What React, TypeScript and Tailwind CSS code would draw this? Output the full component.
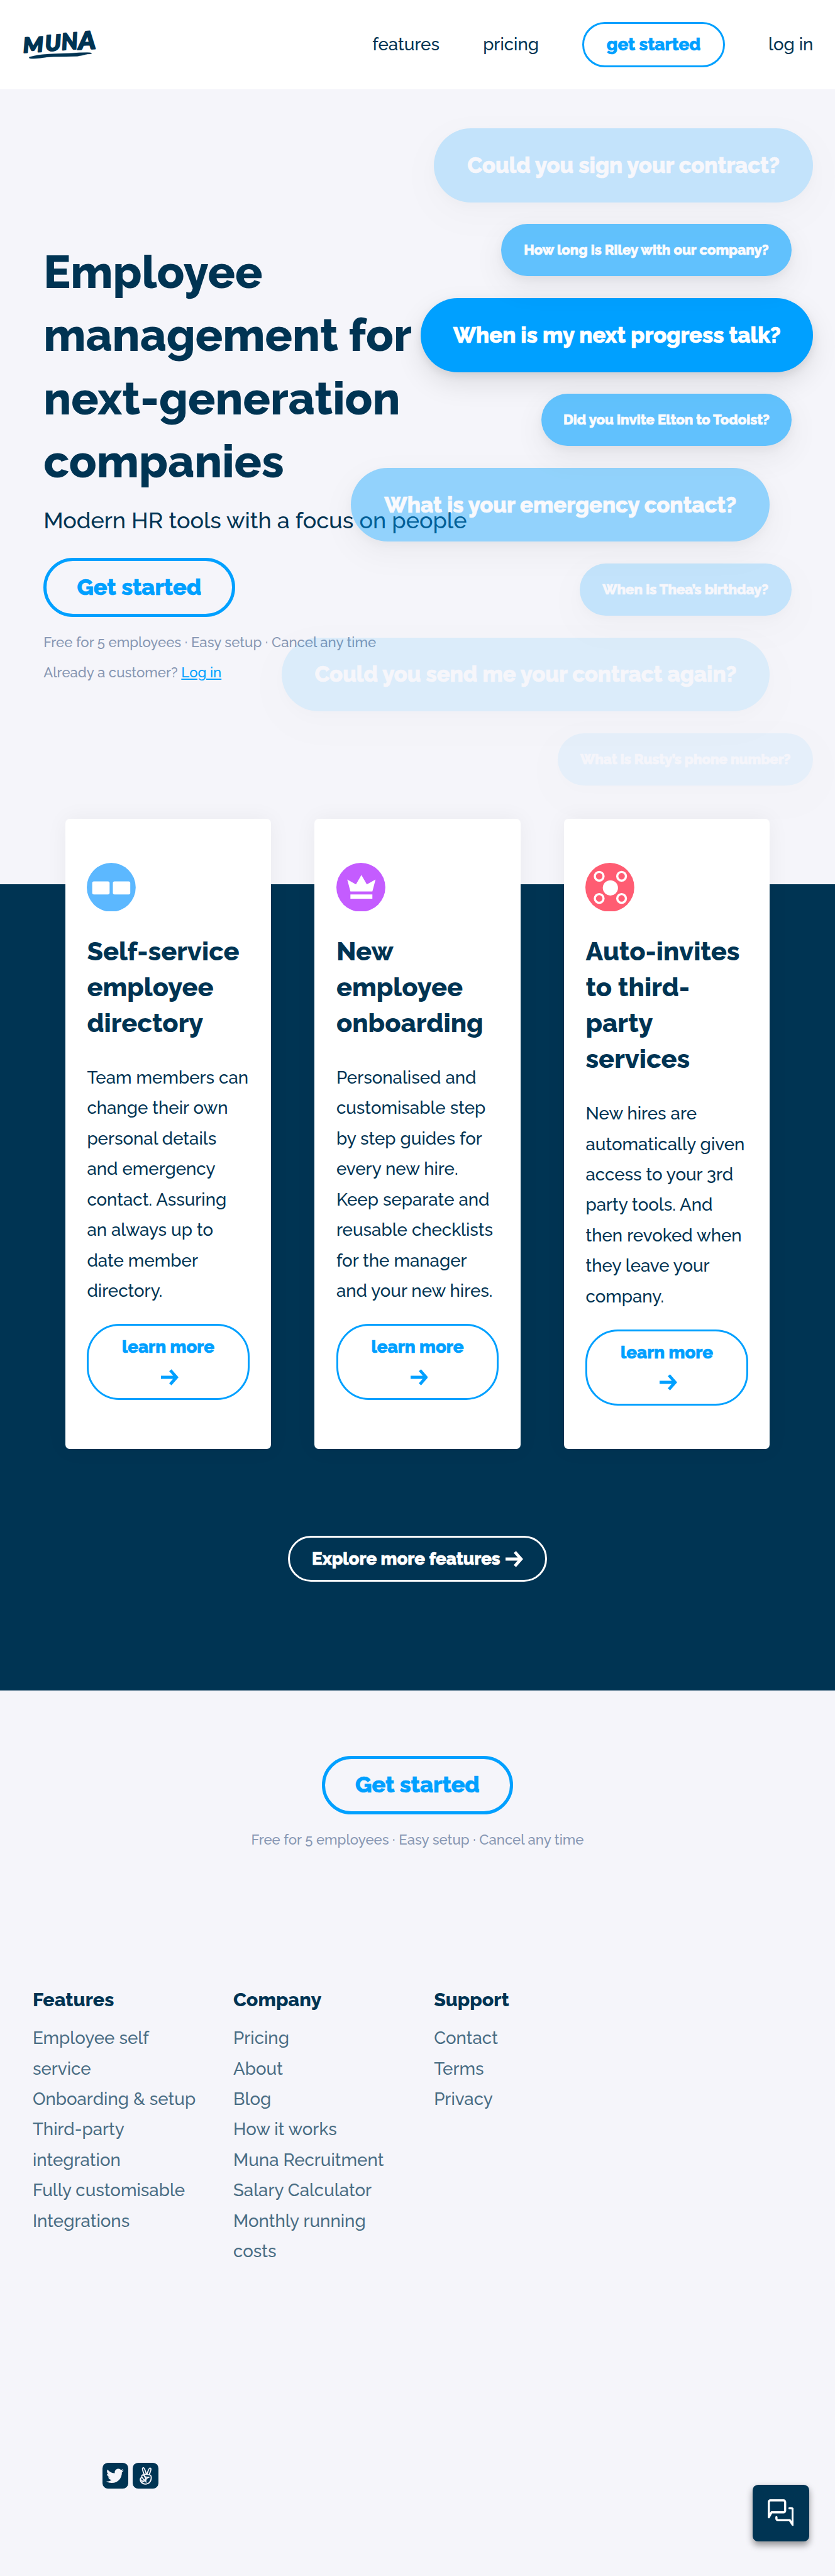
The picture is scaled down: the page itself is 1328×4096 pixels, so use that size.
import type { ReactNode } from "react";
import { FaAngellist, FaTwitter } from "react-icons/fa";

function Arrow() {
  return (
    <svg viewBox="0 0 16 15" className="h-[15px] w-4" fill="none" stroke="currentColor" strokeWidth="2.8">
      <path d="M0 7.5h14M8.600 1l5.700 6.500L8.600 14" />
    </svg>
  );
}

function Logo() {
  return (
    <svg viewBox="120 165 420 175" className="h-[29.2px] w-[70px] overflow-visible" fill="#003453" stroke="#003453" strokeWidth="7" strokeLinejoin="round">
      <g fontFamily="Lato, sans-serif" fontWeight="900" fontStyle="italic">
        <text transform="translate(128 296) rotate(-3)" fontSize="114" textLength="112" lengthAdjust="spacingAndGlyphs">M</text>
        <text transform="translate(250 288) rotate(-4)" fontSize="120" textLength="88" lengthAdjust="spacingAndGlyphs">U</text>
        <text transform="translate(340 281) rotate(-4)" fontSize="126" textLength="90" lengthAdjust="spacingAndGlyphs">N</text>
        <text transform="translate(432 279) rotate(-3)" fontSize="136" textLength="96" lengthAdjust="spacingAndGlyphs">A</text>
      </g>
      <path strokeWidth="1" d="M160 320q38-11 100-16 60-4 120-5 60-4 100-4 20 0 25 4-1 4-24 5-30 8-56 12-60 2-130 2-40 1-76 8-30 4-54 2-8-2-5-8Z" />
    </svg>
  );
}

type Bubble = { text: string; large?: boolean; size: string };

const bubbles: Bubble[] = [
  { text: "Could you sign your contract?", large: true, size: "w-[349px] opacity-20" },
  { text: "How long is Riley with our company?", size: "mr-5 w-[267px] opacity-60" },
  { text: "When is my next progress talk?", large: true, size: "w-[361px]" },
  { text: "Did you invite Elton to Todoist?", size: "mr-5 w-[230px] opacity-60" },
  { text: "What is your emergency contact?", large: true, size: "mr-10 w-[385px] opacity-40" },
  { text: "When is Thea’s birthday?", size: "mr-5 w-[195px] opacity-20" },
  { text: "Could you send me your contract again?", large: true, size: "mr-10 w-[449px] opacity-10" },
  { text: "What is Rusty’s phone number?", size: "w-[235px] opacity-[0.06]" },
];

function Bubbles() {
  return (
    <div className="pointer-events-none absolute top-9 right-5 flex flex-col items-end gap-5">
      {bubbles.map((b) => (
        <div
          key={b.text}
          className={`flex items-center justify-center rounded-full bg-[#00a0ff] font-extrabold whitespace-nowrap text-white shadow-[0_3px_8px_rgba(0,0,0,0.08),0_10px_25px_rgba(0,0,0,0.1)] [-webkit-text-stroke:0.4px] ${
            b.large ? "h-[68px] text-[20px]" : "h-12 text-[12.8px]"
          } ${b.size}`}
        >
          {b.text}
        </div>
      ))}
    </div>
  );
}

function GetStarted() {
  return (
    <a className="flex h-[54px] w-44 items-center justify-center rounded-full border-[3px] border-[#00a0ff] text-[20.8px] font-extrabold text-[#00a0ff] [-webkit-text-stroke:0.4px]">
      Get started
    </a>
  );
}

function Directory() {
  return (
    <svg viewBox="0 0 45 45" className="size-[45px]">
      <circle cx="22.5" cy="22.5" r="22.5" fill="#5cb8ff" />
      <g fill="#fff">
        <rect x="5" y="17" width="16" height="12" rx="1.5" />
        <rect x="24" y="17" width="16" height="12" rx="1.5" />
      </g>
    </svg>
  );
}

function Crown() {
  return (
    <svg viewBox="0 0 45 45" className="size-[45px]">
      <circle cx="22.5" cy="22.5" r="22.5" fill="#c45cff" />
      <path d="M10 15.300l8 4.500 5-8.600 5 8.600 8-4.500-2.900 11H12.900ZM12.900 29h20.200v4H12.900Z" fill="#fff" />
    </svg>
  );
}

function Network() {
  return (
    <svg viewBox="0 0 45 45" className="size-[45px]">
      <circle cx="22.5" cy="22.5" r="22.5" fill="#ff5c72" />
      <circle cx="23" cy="23" r="7" fill="#fff" />
      <g fill="none" stroke="#fff" strokeWidth="2">
        <circle cx="12.7" cy="12.3" r="4" />
        <circle cx="33.3" cy="12.3" r="4" />
        <circle cx="12.7" cy="32.7" r="4" />
        <circle cx="33.3" cy="32.7" r="4" />
      </g>
    </svg>
  );
}

type Card = { icon: ReactNode; title: string[]; body: string[] };

const cards: Card[] = [
  {
    icon: <Directory />,
    title: ["Self-service", "employee", "directory"],
    body: [
      "Team members can",
      "change their own",
      "personal details",
      "and emergency",
      "contact. Assuring",
      "an always up to",
      "date member",
      "directory.",
    ],
  },
  {
    icon: <Crown />,
    title: ["New", "employee", "onboarding"],
    body: [
      "Personalised and",
      "customisable step",
      "by step guides for",
      "every new hire.",
      "Keep separate and",
      "reusable checklists",
      "for the manager",
      "and your new hires.",
    ],
  },
  {
    icon: <Network />,
    title: ["Auto-invites", "to third-", "party", "services"],
    body: [
      "New hires are",
      "automatically given",
      "access to your 3rd",
      "party tools. And",
      "then revoked when",
      "they leave your",
      "company.",
    ],
  },
];

function Lines({ items }: { items: string[] }) {
  return (
    <>
      {items.map((text) => (
        <span key={text} className="block whitespace-nowrap">
          {text}
        </span>
      ))}
    </>
  );
}

function FeatureCard({ icon, title, body }: Card) {
  return (
    <article className="rounded bg-white px-5 py-10 shadow-[0_0_20px_rgba(0,0,0,0.05)]">
      {icon}
      <h3 className="mt-5 text-[24px] leading-[33px] font-extrabold">
        <Lines items={title} />
      </h3>
      <p className="mt-[19.500px] leading-7">
        <Lines items={body} />
      </p>
      <a className="mt-[16.500px] flex h-[70px] flex-col items-center justify-center rounded-[30px] border-2 border-[#00a0ff] leading-7 font-extrabold text-[#00a0ff] [-webkit-text-stroke:0.4px]">
        learn more
        <span className="flex h-7 items-center pl-[3px]">
          <Arrow />
        </span>
      </a>
    </article>
  );
}

type Column = { title: string; items: string[] };

const columns: Column[] = [
  {
    title: "Features",
    items: ["Employee self service", "Onboarding & setup", "Third-party integration", "Fully customisable", "Integrations"],
  },
  {
    title: "Company",
    items: ["Pricing", "About", "Blog", "How it works", "Muna Recruitment", "Salary Calculator", "Monthly running costs"],
  },
  { title: "Support", items: ["Contact", "Terms", "Privacy"] },
];

function ChatButton() {
  return (
    <button className="absolute right-6 bottom-8 flex size-[52px] items-center justify-center rounded-[5px] bg-[#003453] shadow-[0_3px_6px_rgba(0,0,0,0.4)]">
      <svg viewBox="0 0 48 49" className="h-[24.500px] w-6" fill="none" stroke="#fff" strokeWidth="4" strokeLinecap="round" strokeLinejoin="round">
        <path d="M2 5a3 3 0 0 1 3-3h24a3 3 0 0 1 3 3v16a3 3 0 0 1-3 3H7L2 33Z" />
        <path d="M40 16.500h3.500a2.500 2.500 0 0 1 2.500 2.500V47l-5.500-8.500H19a3 3 0 0 1-3-3V33" />
      </svg>
    </button>
  );
}

export default function App() {
  return (
    <div className="relative min-h-[2368px] bg-[#f5f5fa] font-['Raleway','Lato',sans-serif] text-[16px] font-medium text-[#003453] [zoom:1.7297]">
      <header className="flex h-[82px] items-center justify-between bg-white px-5">
        <Logo />
        <nav className="flex items-center gap-10">
          <a>features</a>
          <a>pricing</a>
          <a className="flex h-[42px] w-[131px] items-center justify-center rounded-full border-2 border-[#00a0ff] font-extrabold text-[#00a0ff] [-webkit-text-stroke:0.4px]">
            get started
          </a>
          <a>log in</a>
        </nav>
      </header>

      <section className="relative h-[731px] px-10 pt-[139.400px]">
        <h1 className="text-[41.600px] leading-[58px] font-extrabold">
          <Lines items={["Employee", "management for", "next-generation", "companies"]} />
        </h1>
        <p className="mt-[7.600px] mb-[17px] text-[20.800px] leading-[35px]">Modern HR tools with a focus on people</p>
        <GetStarted />
        <p className="mt-[9.400px] text-[12.850px] leading-7 text-[#8797b3]">
          Free for 5 employees · Easy setup · Cancel any time
        </p>
        <p className="text-[12.850px] leading-7 text-[#8797b3]">
          Already a customer? <a className="text-[#00a0ff] underline">Log in</a>
        </p>
        <Bubbles />
      </section>

      <section className="flex h-[741px] flex-col items-center bg-[#003453] px-[60px]">
        <div className="relative -mt-[60px] grid w-full grid-cols-3 gap-10">
          {cards.map((c) => (
            <FeatureCard key={c.title[0]} {...c} />
          ))}
        </div>
        <a className="mt-20 flex h-[42px] w-[238px] items-center justify-center gap-[5px] rounded-full border-2 border-white font-extrabold text-white [-webkit-text-stroke:0.4px]">
          Explore more features
          <Arrow />
        </a>
      </section>

      <section className="flex flex-col items-center pt-[60px]">
        <GetStarted />
        <p className="mt-[9.400px] text-[12.850px] leading-7 text-[#8797b3]">
          Free for 5 employees · Easy setup · Cancel any time
        </p>
      </section>

      <footer className="px-[30px] pt-[118.600px]">
        <div className="grid h-[259.400px] grid-cols-[184.500px_184.500px_184.500px]">
          {columns.map((c) => (
            <div key={c.title} className="w-[156px]">
              <h4 className="text-[17.600px] leading-7 font-extrabold">{c.title}</h4>
              <ul className="mt-[7.400px] leading-7 opacity-70">
                {c.items.map((item) => (
                  <li key={item}>{item}</li>
                ))}
              </ul>
            </div>
          ))}
        </div>
        <div className="mt-[180.600px] ml-16 flex gap-1 text-[#f5f5fa]">
          <a className="flex size-6 items-center justify-center rounded-[5px] bg-[#003453]">
            <FaTwitter size={16} />
          </a>
          <a className="flex size-6 items-center justify-center rounded-[5px] bg-[#003453]">
            <FaAngellist size={16} />
          </a>
        </div>
      </footer>
      <ChatButton />
    </div>
  );
}
